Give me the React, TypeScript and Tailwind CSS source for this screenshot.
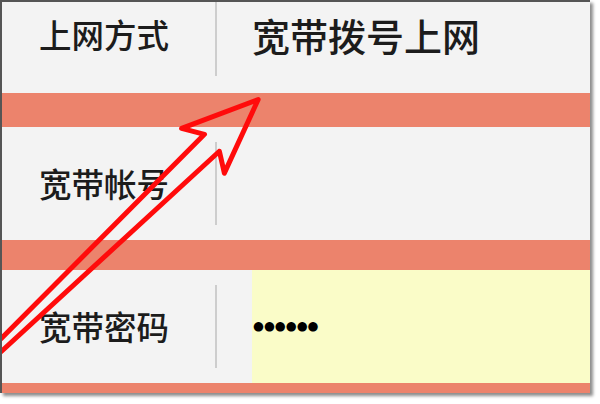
import React from 'react';

const font = { fontFamily: '"Noto Sans CJK SC", "Noto Sans", sans-serif' };

interface RowProps {
  label: string;
  children?: React.ReactNode;
  className?: string;
}

const Row: React.FC<RowProps> = ({ label, children, className = '' }) => (
  <div className={`flex h-[113px] shrink-0 items-center bg-[#f3f3f3] ${className}`}>
    <div className="flex h-full w-[213px] shrink-0 items-center pl-[37px] text-[32.5px] font-medium leading-none text-[#1c1c1c]">
      {label}
    </div>
    <div className="h-[83px] w-[2px] shrink-0 bg-[#cdcdcd]" />
    <div className="flex h-full flex-1 items-center">{children}</div>
  </div>
);

const Band: React.FC<{ h: string }> = ({ h }) => <div className={`${h} shrink-0 bg-[#ec836c]`} />;

const Arrow = () => (
  <svg className="pointer-events-none absolute inset-0 h-full w-full" viewBox="0 0 590 393">
    <path
      d="M -2 339 L 203 133 L 180 127 L 257 98 L 223 172 L 218 150 L -2 352"
      fill="none"
      stroke="#ff0b0b"
      strokeWidth="5"
      strokeLinejoin="round"
    />
  </svg>
);

export default function App() {
  return (
    <div className="h-[404px] w-[600px] bg-white" style={font}>
      <div className="relative flex h-[393px] w-[590px] flex-col overflow-hidden border-l-2 border-t-2 border-[#555] shadow-[3px_3px_3px_rgba(0,0,0,0.45)]">
        <Row label="上网方式" className="-mt-[22px] pb-[4px]">
          <span className="pl-[35px] text-[38px] font-medium leading-none text-[#1c1c1c]">宽带拨号上网</span>
        </Row>
        <Band h="h-[34px]" />
        <Row label="宽带帐号" />
        <Band h="h-[30px]" />
        <Row label="宽带密码">
          <div className="ml-[35px] flex h-full flex-1 items-center bg-[#fafcc8] pl-[1px]">
            <span className="text-[12.5px] leading-none tracking-[0px] text-black" style={{ fontFamily: '"DejaVu Sans", sans-serif' }}>
              ●●●●●●
            </span>
          </div>
        </Row>
        <Band h="h-[10px]" />
        <Arrow />
      </div>
    </div>
  );
}
